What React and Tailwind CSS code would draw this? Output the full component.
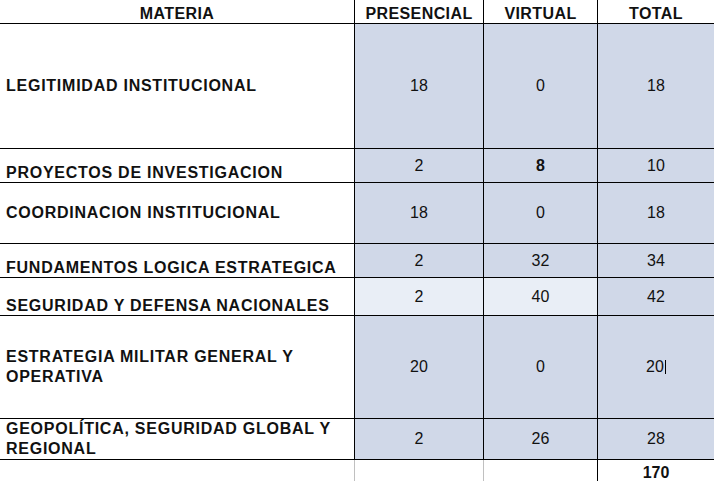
import React from 'react';

const rows = [
  { name: 'LEGITIMIDAD INSTITUCIONAL', p: '18', v: '0', t: '18', h: 'h-[125px]', align: 'items-center' },
  { name: 'PROYECTOS DE INVESTIGACION', p: '2', v: '8', t: '10', h: 'h-[34px]', align: 'items-end', boldV: true },
  { name: 'COORDINACION INSTITUCIONAL', p: '18', v: '0', t: '18', h: 'h-[61px]', align: 'items-center' },
  { name: 'FUNDAMENTOS LOGICA ESTRATEGICA', p: '2', v: '32', t: '34', h: 'h-[34px]', align: 'items-end' },
  { name: 'SEGURIDAD Y DEFENSA NACIONALES', p: '2', v: '40', t: '42', h: 'h-[38px]', align: 'items-end', light: true },
  { name: ['ESTRATEGIA MILITAR GENERAL Y', 'OPERATIVA'], p: '20', v: '0', t: '20', h: 'h-[103px]', align: 'items-center', cursor: true },
  { name: ['GEOPOLÍTICA, SEGURIDAD GLOBAL Y', 'REGIONAL'], p: '2', v: '26', t: '28', h: 'h-[41px]', align: 'items-center' },
];

const NumCell = ({ children, w, bg, bold }) => (
  <div className={`${w} ${bg} border-l border-black flex items-center justify-center ${bold ? 'font-bold' : ''}`}>
    {children}
  </div>
);

export default function App() {
  return (
    <div
      className="w-[714px] h-[481px] overflow-hidden bg-white text-[16px] leading-[18px] text-[#111]"
      style={{ fontFamily: '"Liberation Sans", Arial, sans-serif' }}
    >
      {/* Header */}
      <div className="flex h-[24px] border-b border-black font-bold tracking-[0.4px]">
        <div className="w-[354px] flex items-end justify-center">MATERIA</div>
        <div className="w-[129px] border-l border-black flex items-end justify-center">PRESENCIAL</div>
        <div className="w-[114px] border-l border-black flex items-end justify-center">VIRTUAL</div>
        <div className="w-[117px] border-l border-black flex items-end justify-center">TOTAL</div>
      </div>

      {rows.map((r, i) => {
        const lines = Array.isArray(r.name) ? r.name : [r.name];
        const pvBg = r.light ? 'bg-[#e9eef6]' : 'bg-[#d0d8e8]';
        return (
          <div key={i} className={`flex ${r.h} border-b border-black`}>
            <div className={`w-[354px] flex ${r.align} pl-[6px] font-bold tracking-[0.75px]`}>
              <div className={lines.length > 1 ? 'leading-[20px]' : ''}>
                {lines.map((l, j) => (
                  <div key={j} className="whitespace-nowrap">{l}</div>
                ))}
              </div>
            </div>
            <NumCell w="w-[129px]" bg={pvBg}>{r.p}</NumCell>
            <NumCell w="w-[114px]" bg={pvBg} bold={r.boldV}>{r.v}</NumCell>
            <NumCell w="w-[117px]" bg="bg-[#d0d8e8]">
              {r.t}
              {r.cursor && <span className="inline-block w-px h-[14px] bg-black ml-px"></span>}
            </NumCell>
          </div>
        );
      })}

      {/* Total */}
      <div className="flex h-[22px]">
        <div className="w-[354px]"></div>
        <div className="w-[129px] border-l border-[#c0c0c0]"></div>
        <div className="w-[114px] border-l border-[#c0c0c0]"></div>
        <div className="w-[117px] border-l border-black flex items-end justify-center font-bold">170</div>
      </div>
    </div>
  );
}
